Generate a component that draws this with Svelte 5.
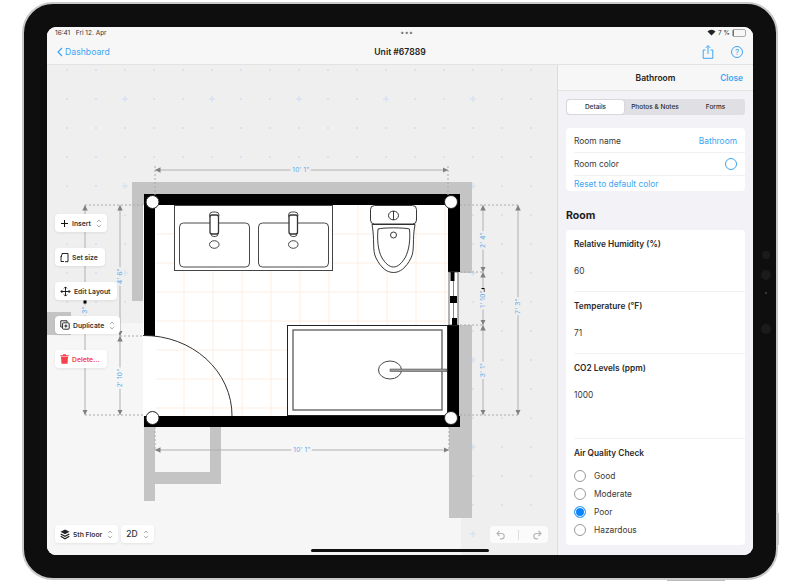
<script>
  const range = (from, to, step) => {
    const out = [];
    for (let v = from; v <= to; v += step) out.push(v);
    return out;
  };

  // dots every 29px, every third one is a plus
  const gridX = range(67, 556, 29);
  const gridY = range(70, 555, 29);
  const tileX = range(184, 445, 29);
  const tileY = range(234, 408, 29);

  const dims = [
    { x1: 155, y1: 170, x2: 448, y2: 170 },
    { x1: 155, y1: 450, x2: 449, y2: 450 },
    { x1: 85, y1: 205, x2: 85, y2: 415 },
    { x1: 120, y1: 205, x2: 120, y2: 336 },
    { x1: 120, y1: 336, x2: 120, y2: 415 },
    { x1: 483, y1: 205, x2: 483, y2: 272 },
    { x1: 483, y1: 272, x2: 483, y2: 325 },
    { x1: 483, y1: 325, x2: 483, y2: 415 },
    { x1: 518, y1: 205, x2: 518, y2: 415 }
  ];

  const guides = [
    "M155 166V195", "M448 166V195", "M155 427V450", "M449 427V450",
    "M85 205H144", "M120 336H143", "M85 415H143",
    "M460 205H518", "M460 272H483", "M460 325H483", "M460 415H518"
  ];

  const labels = [
    { x: 301, y: 170, text: `10' 1"`, bg: "#efefef" },
    { x: 302, y: 450, text: `10' 1"`, bg: "#f6f6f6" },
    { x: 120, y: 276, text: `4' 6"`, bg: "#efefef", v: true },
    { x: 120, y: 378, text: `2' 10"`, bg: "#f6f6f6", v: true },
    { x: 85, y: 310, text: `3"`, bg: "#efefef", v: true },
    { x: 483, y: 240, text: `2' 4"`, bg: "#efefef", v: true },
    { x: 483, y: 299, text: `1' 10"`, bg: "#efefef", v: true },
    { x: 483, y: 370, text: `3' 1"`, bg: "#efefef", v: true },
    { x: 518, y: 306, text: `7' 3"`, bg: "#efefef", v: true }
  ];

  const corners = [[152.5, 202], [451, 202], [152.5, 418], [451, 418]];
  const quality = ["Good", "Moderate", "Poor", "Hazardous"];
</script>

<div class="page">
  <div class="ipad">
    <i class="cam c1"></i>
    <i class="cam c2"></i>
    <i class="cam c3"></i>
    <i class="cam c4"></i>
    <i class="volume"></i>
    <i class="power"></i>
    <div class="screen">
      <div class="top">
        <div class="status">
          <span>16:41&nbsp;&nbsp; Fri 12. Apr</span>
          <span class="dots">•••</span>
          <span class="battery">
            <svg width="9" height="7" viewBox="0 0 9 7"><path d="M0.5 2.4a5.5 5.5 0 0 1 8 0L4.5 6.6z" fill="#222" /></svg>
            7 %
            <i class="batt"><b></b></i>
          </span>
        </div>
        <div class="nav">
          <a class="back">
            <svg width="6" height="10" viewBox="0 0 6 10"><path d="M5 1L1 5l4 4" fill="none" stroke="#3da5f4" stroke-width="1.2" /></svg>
            Dashboard
          </a>
          <strong>Unit #67889</strong>
          <div class="nav-icons">
            <svg width="12" height="14" viewBox="0 0 12 14" fill="none" stroke="#3da5f4" stroke-width="1">
              <path d="M3.5 5H1.2v8.3h9.6V5H8.5M6 9V.8M3.8 2.8L6 .6l2.2 2.2" />
            </svg>
            <span class="help">?</span>
          </div>
        </div>
      </div>

      <div class="main">
        <div class="canvas">
          <svg class="plan" viewBox="47 65 510 490">
            <defs>
              <marker id="tip" viewBox="0 0 6 6" refX="6" refY="3" markerWidth="5.5" markerHeight="5.5" markerUnits="userSpaceOnUse" orient="auto-start-reverse">
                <path d="M0 0L6 3L0 6z" fill="#808080" />
              </marker>
            </defs>

            {#each gridX as x, i}
              {#each gridY as y, j}
                {#if (i + 1) % 3 === 0 && (j - 1) % 3 === 0}
                  <path d="M{x - 3} {y}h6M{x} {y - 3}v6" stroke="#cddff3" stroke-width="1" />
                {:else}
                  <circle cx={x} cy={y} r="1" fill="#cddff3" />
                {/if}
              {/each}
            {/each}

            <path d="M47 323H143V427H461V555H47z" fill="#f6f6f6" />

            <g fill="#c4c4c4">
              <rect x="132" y="182" width="340" height="12" />
              <rect x="132" y="182" width="12" height="119" />
              <rect x="460" y="182" width="12" height="91" />
              <rect x="449" y="325" width="23" height="193" />
              <rect x="47" y="312" width="24" height="23" />
              <rect x="144" y="427" width="11" height="74" />
              <rect x="144" y="472" width="77" height="12" />
              <rect x="210" y="427" width="11" height="57" />
            </g>

            <rect x="143" y="205" width="306" height="211" fill="#fff" />
            <g stroke="#fdeee2" stroke-width="1">
              {#each tileX as x}
                <path d="M{x} 205V416" />
              {/each}
              {#each tileY as y}
                <path d="M156 {y}H448" />
              {/each}
            </g>

            <g fill="#000">
              <rect x="144" y="194" width="316" height="11" />
              <rect x="144" y="194" width="11" height="142" />
              <rect x="144" y="416" width="316" height="11" />
              <rect x="448" y="194" width="12" height="78" />
              <rect x="447" y="325" width="12" height="102" />
            </g>

            <!-- window -->
            <rect x="449" y="272" width="9" height="53" fill="#fff" stroke="#444" stroke-width="0.8" />
            <path d="M453.5 272V325" stroke="#666" stroke-width="0.8" />
            <rect x="450.5" y="272" width="4" height="9" />
            <rect x="450" y="296" width="7" height="7" />
            <rect x="452" y="318" width="5" height="7" />

            <!-- door -->
            <path d="M143 335.5A88 80 0 0 1 232 416" fill="none" stroke="#333" stroke-width="1" />

            <!-- double sink -->
            <rect x="174.5" y="205.5" width="158" height="65" fill="#fff" stroke="#444" />
            {#each [0, 79] as dx}
              <g transform="translate({dx} 0)" fill="#fff" stroke="#333" stroke-width="0.9">
                <rect x="179.5" y="223" width="70" height="44" rx="4" />
                <rect x="209.5" y="212" width="9.5" height="6.5" rx="3.2" />
                <rect x="211" y="231" width="7" height="5.5" rx="2.7" />
                <rect x="210" y="215" width="8.5" height="19" rx="2" stroke-width="1.3" />
                <ellipse cx="214.3" cy="244.5" rx="4.8" ry="3.8" />
              </g>
            {/each}

            <!-- toilet -->
            <g fill="#fff" stroke="#222" stroke-width="0.9">
              <path d="M372 224.5C375 240 372 250 376 258C381 268 387 272.5 393.5 272.5C400 272.5 406 268 411 258C415 250 412 240 415 224.5z" />
              <path d="M378 229C382 227.5 405 227.5 409.5 229C410.5 240 409 250 405.5 257C402 263 398 267 393.5 267C389 267 385 263 381.5 257C378 250 377 240 378 229z" />
              <rect x="370.5" y="205.5" width="46" height="18.5" rx="4" />
              <ellipse cx="393.5" cy="215.5" rx="5" ry="4.4" />
              <path d="M393.5 211v9" />
              <circle cx="393.5" cy="235" r="3" />
            </g>

            <!-- bath -->
            <rect x="287.5" y="325.5" width="160" height="90" fill="#fff" stroke="#222" />
            <rect x="293" y="330" width="149" height="80" fill="#fff" stroke="#666" stroke-width="1.4" />
            <ellipse cx="390" cy="370" rx="11.5" ry="9" fill="#fff" stroke="#333" stroke-width="0.9" />
            <rect x="390" y="369" width="57" height="2.6" fill="#999" stroke="#444" stroke-width="0.5" />

            <g stroke="#aaa" stroke-width="1" stroke-dasharray="2 2" fill="none">
              {#each guides as d}
                <path {d} />
              {/each}
            </g>
            {#each dims as d}
              <line x1={d.x1} y1={d.y1} x2={d.x2} y2={d.y2} stroke="#b0b0b0" stroke-width="1" marker-start="url(#tip)" marker-end="url(#tip)" />
            {/each}
            <rect x="481.5" y="288" width="3" height="4" />
            <rect x="83.5" y="300.5" width="3" height="3" />
            {#each labels as l}
              <text
                class="dim"
                x={l.x}
                y={l.y}
                stroke={l.bg}
                transform={l.v ? `rotate(-90 ${l.x} ${l.y})` : undefined}>{l.text}</text>
            {/each}

            {#each corners as [cx, cy]}
              <circle {cx} {cy} r="6.5" fill="#fff" stroke="#222" stroke-width="1" />
            {/each}
          </svg>

          <div class="tools">
            <div class="tool">
              <svg width="9" height="9" viewBox="0 0 9 9"><path d="M4.5 1v7M1 4.5h7" stroke="#111" stroke-width="1" /></svg>
              Insert
              <svg class="updown" width="6" height="9" viewBox="0 0 6 9"><path d="M1 3.2L3 1l2 2.2M1 5.8L3 8l2-2.2" fill="none" stroke="#999" stroke-width="0.8" /></svg>
            </div>
            <div class="tool pad">
              <svg width="9" height="11" viewBox="0 0 9 11" fill="none" stroke="#111" stroke-width="0.9"><path d="M2 3V1.5h6v8.2H5M1 4v5.5h3M1 4l1-1M1 4l1 1" /></svg>
              Set size
            </div>
            <div class="tool pad">
              <svg width="11" height="11" viewBox="0 0 11 11" fill="none" stroke="#111" stroke-width="0.9"><path d="M5.5 1v9M1 5.5h9M4 2.4l1.5-1.5L7 2.4M4 8.6l1.5 1.5L7 8.6M2.4 4L.9 5.5 2.4 7M8.6 4l1.5 1.5L8.6 7" /></svg>
              Edit Layout
            </div>
            <div class="tool">
              <svg width="10" height="10" viewBox="0 0 10 10" fill="none" stroke="#111" stroke-width="0.9"><path d="M7 2V.8H.8V7H2" /><rect x="2.6" y="2.8" width="6.6" height="6.4" rx="1" /><path d="M5.9 4.4v3.2M4.3 6h3.2" /></svg>
              Duplicate
              <svg class="updown" width="6" height="9" viewBox="0 0 6 9"><path d="M1 3.2L3 1l2 2.2M1 5.8L3 8l2-2.2" fill="none" stroke="#999" stroke-width="0.8" /></svg>
            </div>
            <div class="tool danger pad">
              <svg width="9" height="10" viewBox="0 0 9 10" fill="#f5414b"><path d="M3.2.3h2.6l.4 1h2.5v1H.3v-1h2.5zM1 2.8h7l-.5 7H1.5z" /></svg>
              Delete...
            </div>
          </div>

          <div class="floor-bar">
            <div class="tool">
              <svg width="10" height="11" viewBox="0 0 10 11"><path d="M5 .5l4.5 2.3L5 5.2.5 2.8z" fill="#222" /><path d="M.7 5l4.3 2.3L9.3 5M.7 7.2L5 9.8l4.3-2.6" fill="none" stroke="#222" stroke-width="1.3" /></svg>
              5th Floor
              <svg class="updown" width="6" height="9" viewBox="0 0 6 9"><path d="M1 3.2L3 1l2 2.2M1 5.8L3 8l2-2.2" fill="none" stroke="#999" stroke-width="0.8" /></svg>
            </div>
            <div class="tool two-d">
              2D
              <svg class="updown" width="6" height="9" viewBox="0 0 6 9"><path d="M1 3.2L3 1l2 2.2M1 5.8L3 8l2-2.2" fill="none" stroke="#999" stroke-width="0.8" /></svg>
            </div>
          </div>

          <div class="undo">
            <svg width="10" height="10" viewBox="0 0 10 10" fill="none" stroke="#b5b5b5" stroke-width="1.1"><path d="M3.5 1L1 3.5 3.5 6M1 3.5h4.5a2.7 2.7 0 0 1 0 5.4H4" /></svg>
            <i></i>
            <svg width="10" height="10" viewBox="0 0 10 10" fill="none" stroke="#b5b5b5" stroke-width="1.1"><path d="M6.5 1L9 3.5 6.5 6M9 3.5H4.5a2.7 2.7 0 0 0 0 5.4H6" /></svg>
          </div>
        </div>

        <aside class="side">
          <header>
            <strong>Bathroom</strong>
            <a>Close</a>
          </header>
          <div class="side-body">
            <div class="segments">
              <span class="on">Details</span>
              <span>Photos &amp; Notes</span>
              <span>Forms</span>
            </div>

            <div class="card names">
              <div class="row"><span>Room name</span><a>Bathroom</a></div>
              <div class="row"><span>Room color</span><i class="color"></i></div>
              <a class="reset">Reset to default color</a>
            </div>

            <h2>Room</h2>

            <div class="card form">
              <div class="field">
                <label>Relative Humidity (%)</label>
                <p>60</p>
              </div>
              <div class="field">
                <label>Temperature (°F)</label>
                <p>71</p>
              </div>
              <div class="field tall">
                <label>CO2 Levels (ppm)</label>
                <p>1000</p>
              </div>
              <div class="field last">
                <label>Air Quality Check</label>
                <ul>
                  {#each quality as q}
                    <li><i class="radio" class:sel={q === "Poor"}></i>{q}</li>
                  {/each}
                </ul>
              </div>
            </div>
          </div>
        </aside>
      </div>
      <i class="home"></i>
    </div>
  </div>
</div>

<style>
  :global(body) {
    margin: 0;
    background: #fff;
  }

  .page {
    width: 800px;
    height: 583px;
    padding: 2px 22px 3px 22px;
    box-sizing: border-box;
    font-family: Inter, "Liberation Sans", sans-serif;
    color: #2b2b2b;
    overflow: hidden;
  }

  .ipad {
    position: relative;
    height: 100%;
    box-sizing: border-box;
    padding: 23px;
    background: #0e0e0e;
    border: 2px solid #c9c9c9;
    border-radius: 31px;
  }

  .cam {
    position: absolute;
    left: 738px;
    width: 8px;
    height: 8px;
    border-radius: 50%;
    background: #1b1b1b;
  }
  .c1 { top: 247px; }
  .c2 { top: 266px; width: 10px; height: 10px; left: 737px; }
  .c3 { top: 288px; width: 2px; height: 2px; left: 741px; background: #444; }
  .c4 { top: 320px; width: 10px; height: 10px; left: 737px; }

  .volume {
    position: absolute;
    right: -3px;
    top: 509px;
    width: 1px;
    height: 32px;
    background: #ccc;
  }

  .power {
    position: absolute;
    left: 643px;
    bottom: -3px;
    width: 58px;
    height: 1px;
    background: #bbb;
  }

  .screen {
    position: relative;
    display: flex;
    flex-direction: column;
    height: 100%;
    border-radius: 9px;
    overflow: hidden;
    background: #f6f6f6;
  }

  .top {
    height: 38px;
    box-sizing: border-box;
    flex: none;
    background: #f7f7f7;
    border-bottom: 1px solid #e3e3e3;
    padding: 0 8px;
  }

  .status {
    display: flex;
    justify-content: space-between;
    align-items: center;
    height: 11px;
    font-size: 6.5px;
    color: #333;
  }

  .dots {
    color: #777;
    font-size: 7px;
    letter-spacing: 0.4px;
  }

  .battery {
    display: flex;
    align-items: center;
    gap: 2px;
    margin-right: -1px;
  }

  .batt {
    display: block;
    width: 12px;
    height: 6px;
    border: 1px solid #aaa;
    border-radius: 2px;
  }
  .batt b {
    display: block;
    width: 1px;
    height: 6px;
    background: #f33;
  }

  .nav {
    position: relative;
    display: flex;
    align-items: center;
    justify-content: space-between;
    height: 27px;
    padding-top: 1px;
    box-sizing: border-box;
  }

  .back {
    display: flex;
    align-items: center;
    gap: 2px;
    margin-left: 2px;
    color: #3da5f4;
    font-size: 8.7px;
  }

  .nav strong {
    position: absolute;
    left: 0;
    right: 0;
    text-align: center;
    font-size: 8.6px;
    font-weight: 600;
    color: #222;
  }

  .nav-icons {
    display: flex;
    align-items: center;
    gap: 17px;
    margin-right: 2px;
  }

  .help {
    display: block;
    width: 10px;
    height: 10px;
    border: 1px solid #3da5f4;
    border-radius: 50%;
    color: #3da5f4;
    font-size: 8px;
    line-height: 10px;
    text-align: center;
  }

  .main {
    flex: 1;
    min-height: 0;
    display: flex;
  }

  .canvas {
    position: relative;
    flex: 1;
    background: #efefef;
  }

  .plan {
    display: block;
    width: 100%;
    height: 100%;
  }

  .dim {
    font-size: 6.5px;
    fill: #5aa9e8;
    stroke-width: 4px;
    paint-order: stroke;
    text-anchor: middle;
    dominant-baseline: central;
    letter-spacing: 0.2px;
  }

  .tools {
    position: absolute;
    left: 8px;
    top: 149px;
    display: flex;
    flex-direction: column;
    align-items: flex-start;
    gap: 16px;
  }

  .tool {
    display: flex;
    align-items: center;
    gap: 3px;
    height: 18px;
    padding: 0 5px;
    background: #fff;
    border-radius: 4px;
    box-shadow: 0 1px 3px rgba(0, 0, 0, 0.08);
    font-size: 6.8px;
    font-weight: 600;
    color: #333;
  }

  .pad {
    padding-right: 7px;
  }

  .updown {
    margin-left: 2px;
  }

  .danger {
    color: #f5414b;
  }

  .floor-bar {
    position: absolute;
    left: 8px;
    bottom: 12px;
    display: flex;
    gap: 3px;
  }

  .two-d {
    font-size: 8.5px;
    font-weight: 500;
  }

  .undo {
    position: absolute;
    right: 9px;
    bottom: 12px;
    display: flex;
    align-items: center;
    justify-content: space-around;
    width: 58px;
    height: 17px;
    background: #fbfbfb;
    border-radius: 4px;
  }

  .undo i {
    display: block;
    width: 1px;
    height: 10px;
    background: #ddd;
  }

  .side {
    flex: none;
    width: 196px;
    box-sizing: border-box;
    border-left: 1px solid #dcdcdc;
    background: #f2f2f7;
  }

  .side header {
    position: relative;
    display: flex;
    justify-content: flex-end;
    align-items: center;
    height: 25px;
    padding-right: 10px;
    background: #f7f7f7;
    border-bottom: 1px solid #e3e3e3;
  }

  .side header strong {
    position: absolute;
    left: 0;
    right: 0;
    text-align: center;
    font-size: 8.5px;
    font-weight: 600;
    color: #222;
  }

  .side header a {
    color: #3da5f4;
    font-size: 8.3px;
    font-weight: 600;
  }

  .side-body {
    padding: 8px 8px 0 8px;
  }

  .segments {
    display: grid;
    grid-template-columns: 58px 62px 1fr;
    height: 16px;
    background: #dfdfe4;
    border-radius: 3px;
    font-size: 6.5px;
    font-weight: 500;
    text-align: center;
    line-height: 16px;
  }

  .segments .on {
    background: #fff;
    border-radius: 3px;
    box-shadow: 0 0 2px rgba(0, 0, 0, 0.12);
    margin: 1px 0 1px 1px;
    line-height: 14px;
  }

  .card {
    background: #fff;
    border-radius: 4px;
    padding-left: 8px;
    font-size: 8.4px;
  }

  .names {
    margin-top: 13px;
    height: 63px;
    padding-top: 2px;
    box-sizing: border-box;
  }

  .row {
    display: flex;
    align-items: center;
    justify-content: space-between;
    height: 22px;
    padding-right: 8px;
    border-bottom: 1px solid #f2f2f5;
    color: #3a3a3a;
  }

  .row a,
  .reset {
    color: #3da5f4;
  }

  .color {
    display: block;
    width: 10px;
    height: 10px;
    border: 1.2px solid #3da5f4;
    border-radius: 50%;
    box-sizing: content-box;
  }

  .reset {
    display: block;
    line-height: 16px;
  }

  h2 {
    margin: 18px 0 7px;
    font-size: 10.5px;
    line-height: 14px;
    font-weight: 700;
    color: #1c1c1e;
  }

  .form {
    height: 315px;
    box-sizing: border-box;
  }

  .field {
    padding: 8px 0 14px;
    height: 62px;
    box-sizing: border-box;
    border-bottom: 1px solid #f2f2f5;
  }
  .field.tall {
    height: 84.5px;
  }
  .field.last {
    border-bottom: 0;
  }

  label {
    display: block;
    font-size: 8.3px;
    line-height: 12px;
    font-weight: 600;
    color: #2b2b2b;
  }

  .field p {
    margin: 14.5px 0 0;
    font-size: 8.4px;
    line-height: 12px;
    color: #3a3a3a;
  }

  ul {
    list-style: none;
    margin: 8.5px 0 0;
    padding: 0;
  }

  li {
    display: flex;
    align-items: center;
    gap: 8px;
    height: 18px;
    font-size: 8.4px;
    color: #3a3a3a;
  }

  .radio {
    display: block;
    width: 10px;
    height: 10px;
    border: 1px solid #999;
    border-radius: 50%;
    box-sizing: content-box;
  }

  .radio.sel {
    border-color: #3da5f4;
    background: #0a84ff;
    box-shadow: inset 0 0 0 1px #fff;
  }

  .home {
    position: absolute;
    left: 264px;
    bottom: 3px;
    width: 178px;
    height: 3px;
    border-radius: 2px;
    background: #111;
  }
</style>
